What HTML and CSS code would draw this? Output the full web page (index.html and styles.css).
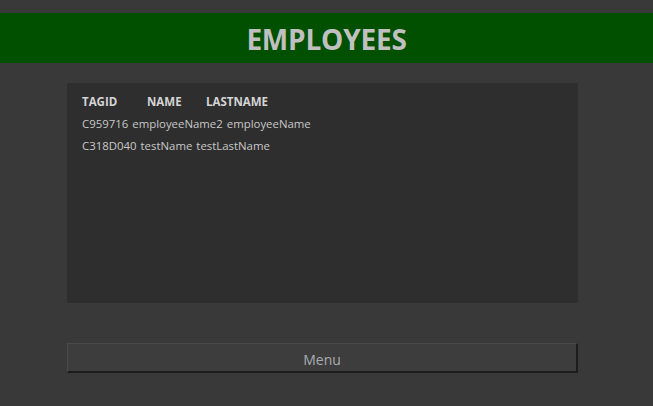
FILE: index.html
```html
<!DOCTYPE html>
<html>
<head>
<meta charset="utf-8">
<link rel="stylesheet" href="styles.css">
</head>
<body>
<header class="title-bar"><h1 class="title">EMPLOYEES</h1></header>
<main class="content">
  <section class="list-panel">
    <div class="list-header">
      <span class="hcell h-tag">TAGID</span>
      <span class="hcell h-name">NAME</span>
      <span class="hcell h-last">LASTNAME</span>
    </div>
    <div class="list-row">
      <span class="cell">C959716</span>
      <span class="cell">employeeName2</span>
      <span class="cell">employeeName</span>
    </div>
    <div class="list-row">
      <span class="cell">C318D040</span>
      <span class="cell">testName</span>
      <span class="cell">testLastName</span>
    </div>
  </section>
  <button class="menu-btn">Menu</button>
</main>
</body>
</html>
```
FILE: styles.css
```css
html, body {
  margin: 0;
  padding: 0;
  background: #393939;
  font-family: "Open Sans", "Noto Sans", sans-serif;
}
.title-bar {
  margin-top: 13px;
  height: 50px;
  background: #005000;
  display: flex;
  align-items: center;
  justify-content: center;
}
.title {
  margin: 0;
  font-size: 28px;
  font-weight: 700;
  color: #c0c0c0;
  letter-spacing: -0.2px;
  line-height: 1;
  padding-top: 2px;
}
.content {
  display: flex;
  flex-direction: column;
  margin: 20px 75px 0 67px;
}
.list-panel {
  height: 220px;
  background: #2e2e2e;
  box-sizing: border-box;
  padding: 7px 0 0 15px;
  display: flex;
  flex-direction: column;
}
.list-header {
  display: flex;
  height: 22px;
  align-items: center;
}
.hcell {
  font-size: 11.5px;
  font-weight: 700;
  color: #d4d4d4;
}
.h-tag { width: 65px; }
.h-name { width: 59px; }
.list-row {
  display: flex;
  gap: 4px;
  height: 22px;
  align-items: center;
}
.cell {
  font-size: 11.4px;
  color: #c8c8c8;
}
.menu-btn {
  margin-top: 40px;
  height: 30px;
  background: #3d3d3d;
  border: 1px solid #4a4a4a;
  border-right: 2px solid #1c1c1c;
  border-bottom: 2px solid #1c1c1c;
  color: #a8acb0;
  font-family: "Open Sans", "Noto Sans", sans-serif;
  font-size: 14px;
  padding: 3px 0 0 0;
}
```
